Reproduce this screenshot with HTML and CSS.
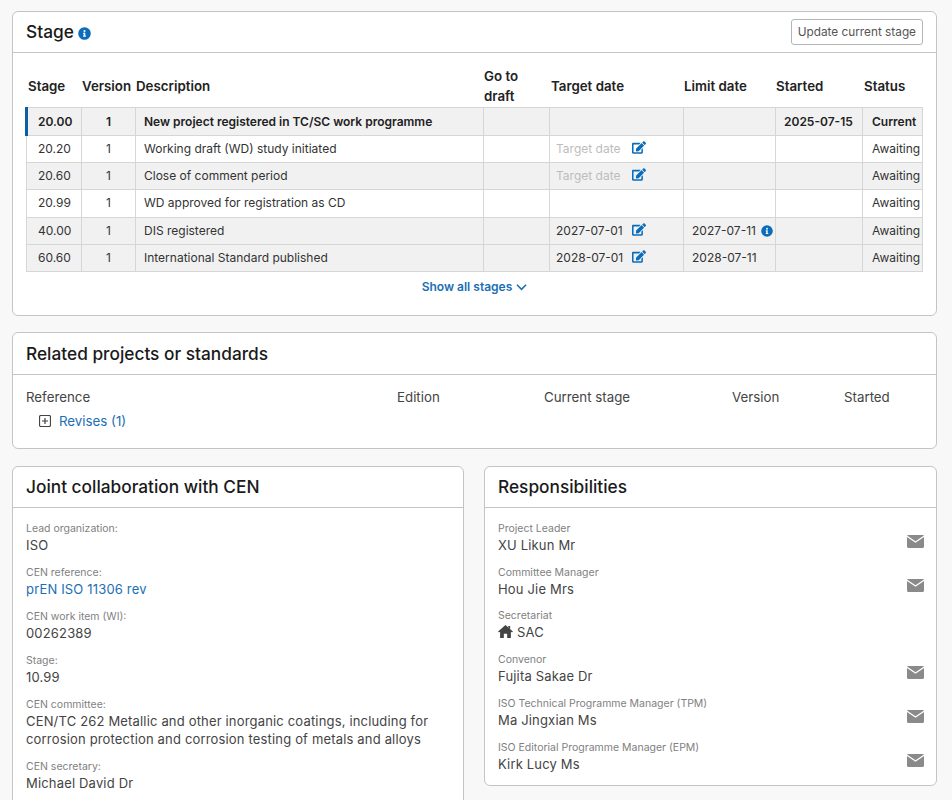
FILE: index.html
```html
<!DOCTYPE html>
<html lang="en">
<head>
<meta charset="utf-8">
<title>Stage</title>
<link rel="stylesheet" href="styles.css">
</head>
<body>
<svg class="defs" width="0" height="0" aria-hidden="true">
  <symbol id="i-info" viewBox="0 0 512 512"><path d="M256 8a248 248 0 1 0 0 496 248 248 0 0 0 0-496zm0 110a42 42 0 1 1 0 84 42 42 0 0 1 0-84zm56 254c0 7-5 12-12 12h-88c-7 0-12-5-12-12v-24c0-7 5-12 12-12h12v-64h-12c-7 0-12-5-12-12v-24c0-7 5-12 12-12h64c7 0 12 5 12 12v100h12c7 0 12 5 12 12z"/></symbol>
  <symbol id="i-edit" viewBox="0 0 576 512"><path d="M402.600 83.200l90.200 90.200c3.800 3.800 3.800 10 0 13.800L274.400 405.600l-92.800 10.300c-12.400 1.400-22.900-9.100-21.500-21.500l10.300-92.800L388.800 83.200c3.800-3.800 10-3.800 13.800 0zm162-22.900l-48.800-48.800c-15.200-15.200-39.900-15.200-55.200 0l-35.400 35.400c-3.800 3.800-3.800 10 0 13.800l90.200 90.200c3.800 3.800 10 3.800 13.800 0l35.400-35.400c15.200-15.300 15.200-40 0-55.200zM384 346.200V448H64V128h229.800c3.200 0 6.200-1.300 8.500-3.500l40-40c7.600-7.600 2.200-20.500-8.500-20.500H48C21.500 64 0 85.500 0 112v352c0 26.500 21.500 48 48 48h352c26.500 0 48-21.500 48-48V306.200c0-10.700-12.900-16-20.500-8.500l-40 40c-2.200 2.300-3.500 5.300-3.500 8.500z"/></symbol>
  <symbol id="i-mail" viewBox="0 0 17 13"><path d="M1.200 0h14.600c.6 0 1 .2 1.200.5L8.500 6.300 0 .5C.2.200.6 0 1.200 0zM0 2l8.500 5.800L17 2v9.800c0 .7-.5 1.200-1.200 1.200H1.200C.5 13 0 12.500 0 11.800z"/></symbol>
  <symbol id="i-home" viewBox="0 0 16 14"><path d="M8 0 16 7 15 8.200 13.800 7.200V14H9.800V9.500H6.200V14H2.200V7.200L1 8.200 0 7zM11 1h2v3.200L11 2.500z"/></symbol>
</svg>
<main class="page">
  <section class="card">
    <header class="card-head">
      <h2 class="title">Stage <svg class="ic-info-lg"><use href="#i-info"/></svg></h2>
      <button class="btn" type="button">Update current stage</button>
    </header>
    <div class="card-body body-stage">
      <table class="stages">
        <colgroup>
          <col class="c1"><col class="c2"><col class="c3"><col class="c4"><col class="c5"><col class="c6"><col class="c7"><col class="c8">
        </colgroup>
        <thead>
          <tr><th class="th-wide">Stage</th><th>Version</th><th>Description</th><th>Go to draft</th><th class="th-wide">Target date</th><th>Limit date</th><th>Started</th><th class="th-wide">Status</th></tr>
        </thead>
        <tbody>
          <tr class="current alt"><td class="num"><span class="bar"></span>20.00</td><td class="ver">1</td><td class="desc">New project registered in TC/SC work programme</td><td></td><td></td><td></td><td class="date">2025-07-15</td><td class="st">Current</td></tr>
          <tr><td class="num">20.20</td><td class="ver">1</td><td class="desc">Working draft (WD) study initiated</td><td></td><td class="date tcell"><span class="tgt muted">Target date</span><svg class="ic-edit"><use href="#i-edit"/></svg></td><td></td><td></td><td class="st">Awaiting</td></tr>
          <tr class="alt"><td class="num">20.60</td><td class="ver">1</td><td class="desc">Close of comment period</td><td></td><td class="date tcell"><span class="tgt muted">Target date</span><svg class="ic-edit"><use href="#i-edit"/></svg></td><td></td><td></td><td class="st">Awaiting</td></tr>
          <tr class="tall"><td class="num">20.99</td><td class="ver">1</td><td class="desc">WD approved for registration as CD</td><td></td><td></td><td></td><td></td><td class="st">Awaiting</td></tr>
          <tr class="alt"><td class="num">40.00</td><td class="ver">1</td><td class="desc">DIS registered</td><td></td><td class="date tcell"><span class="tgt">2027-07-01</span><svg class="ic-edit"><use href="#i-edit"/></svg></td><td class="date">2027-07-11<svg class="ic-info"><use href="#i-info"/></svg></td><td></td><td class="st">Awaiting</td></tr>
          <tr class="alt"><td class="num">60.60</td><td class="ver">1</td><td class="desc">International Standard published</td><td></td><td class="date tcell"><span class="tgt">2028-07-01</span><svg class="ic-edit"><use href="#i-edit"/></svg></td><td class="date">2028-07-11</td><td></td><td class="st">Awaiting</td></tr>
        </tbody>
      </table>
      <p class="show-all"><a href="#">Show all stages <svg class="chev" viewBox="0 0 12 8"><path d="M1 1.500 6 6.500l5-5"/></svg></a></p>
    </div>
  </section>

  <section class="card">
    <header class="card-head head-tall"><h2 class="title">Related projects or standards</h2></header>
    <div class="card-body body-related">
      <div class="rel-grid">
        <span>Reference</span><span>Edition</span><span>Current stage</span><span>Version</span><span>Started</span>
      </div>
      <div class="revises">
        <svg class="plus" viewBox="0 0 12 12"><rect x=".5" y=".5" width="11" height="11" rx="1.500"/><path d="M6 3v6M3 6h6"/></svg>
        <a href="#">Revises (1)</a>
      </div>
    </div>
  </section>

  <div class="cols">
    <section class="card col-left">
      <header class="card-head"><h2 class="title">Joint collaboration with CEN</h2></header>
      <div class="card-body body-list">
        <dl class="field"><dt>Lead organization:</dt><dd>ISO</dd></dl>
        <dl class="field"><dt>CEN reference:</dt><dd><a href="#">prEN ISO 11306 rev</a></dd></dl>
        <dl class="field"><dt>CEN work item (WI):</dt><dd>00262389</dd></dl>
        <dl class="field"><dt>Stage:</dt><dd>10.99</dd></dl>
        <dl class="field"><dt>CEN committee:</dt><dd>CEN/TC 262 Metallic and other inorganic coatings, including for corrosion protection and corrosion testing of metals and alloys</dd></dl>
        <dl class="field"><dt>CEN secretary:</dt><dd>Michael David Dr</dd></dl>
      </div>
    </section>
    <section class="card col-right">
      <header class="card-head"><h2 class="title">Responsibilities</h2></header>
      <div class="card-body body-resp">
        <div class="person"><dl class="field"><dt>Project Leader</dt><dd>XU Likun Mr</dd></dl><svg class="mail"><use href="#i-mail"/></svg></div>
        <div class="person person-tight"><dl class="field"><dt>Committee Manager</dt><dd>Hou Jie Mrs</dd></dl><svg class="mail"><use href="#i-mail"/></svg></div>
        <div class="person"><dl class="field"><dt>Secretariat</dt><dd><svg class="home"><use href="#i-home"/></svg>SAC</dd></dl></div>
        <div class="person"><dl class="field"><dt>Convenor</dt><dd>Fujita Sakae Dr</dd></dl><svg class="mail"><use href="#i-mail"/></svg></div>
        <div class="person"><dl class="field"><dt>ISO Technical Programme Manager (TPM)</dt><dd>Ma Jingxian Ms</dd></dl><svg class="mail"><use href="#i-mail"/></svg></div>
        <div class="person"><dl class="field"><dt>ISO Editorial Programme Manager (EPM)</dt><dd>Kirk Lucy Ms</dd></dl><svg class="mail"><use href="#i-mail"/></svg></div>
      </div>
    </section>
  </div>
</main>
</body>
</html>
```
FILE: styles.css
```css
* { box-sizing: border-box; }
html, body { margin: 0; padding: 0; height: 800px; overflow: hidden; }
body { background: #f8f8f8; color: #333; font-family: Inter, "Liberation Sans", sans-serif; font-size: 14px; line-height: 20px; }
a { color: #1a6fb5; text-decoration: none; }
.defs { position: absolute; }
.page { padding: 11px 15px 0 12px; display: flex; flex-direction: column; gap: 16px; }
.card { background: #fff; border: 1px solid #c4c4c4; border-radius: 6px; }
.card-head { height: 41px; border-bottom: 1px solid #c4c4c4; padding: 0 13px; display: flex; align-items: center; justify-content: space-between; }
.head-tall { height: 42px; }
.title { margin: 0; font-size: 17.3px; line-height: 24px; font-weight: 500; color: #1a1a1a; display: flex; align-items: center; gap: 4px; }
.ic-info-lg { width: 13px; height: 13px; fill: #0b6cbb; margin-top: 2px; }
.btn { height: 26px; padding: 0 6px; background: #fff; border: 1px solid #b5b5b5; border-radius: 3px; font: 11.800px/18px Inter, "Liberation Sans", sans-serif; color: #555; }
.body-stage { padding: 13px 13px 0; height: 262px; }
.stages { border-collapse: collapse; table-layout: fixed; width: 896px; }
.c1 { width: 55px; } .c2 { width: 54px; } .c3 { width: 348px; } .c4 { width: 66px; } .c5 { width: 134px; } .c6 { width: 92px; } .c7 { width: 87px; } .c8 { width: 60px; }
.stages th { font-weight: 600; font-size: 13.3px; line-height: 20px; text-align: left; color: #222; padding: 0 0 1px .5px; height: 41px; vertical-align: middle; }
.stages th.th-wide { padding-left: 1.500px; }
.stages td { border: 1px solid #d6d6d6; font-size: 12px; line-height: 18px; height: 27px; padding: 0 8px; color: #333; white-space: nowrap; }
.stages tr.tall td { height: 28px; padding-bottom: 1px; }
.stages .alt td { background: #f1f1f1; }
.stages .current td { font-weight: 600; color: #222; height: 28px; }
.stages .num { padding: 0 0 0 11px; position: relative; }
.bar { position: absolute; left: -2px; top: -1px; bottom: -1px; width: 3px; background: #0b5fa5; }
.stages .ver { text-align: center; }
.stages .tcell { padding-left: 6px; }
.stages .st { padding: 0 0 0 9px; }
.tgt { display: inline-block; width: 76px; }
.muted { color: #bdbdbd; }
.ic-edit { width: 14px; height: 13px; fill: #0b6cbb; vertical-align: -1px; }
.ic-info { width: 12px; height: 12px; fill: #0b6cbb; margin-left: 5px; vertical-align: -2px; }
.show-all { margin: 5px 0 0; text-align: center; font-size: 12px; line-height: 20px; font-weight: 600; }
.chev { width: 11px; height: 8px; fill: none; stroke: #1a6fb5; stroke-width: 1.700; margin-left: 1px; }
.body-related { padding: 12px 13px 0; height: 73px; color: #444; font-size: 13.300px; }
.rel-grid { display: grid; grid-template-columns: 371px 147px 188px 112px 1fr; }
.revises { margin: 4px 0 0 13px; display: flex; align-items: center; gap: 8px; }
.plus { width: 12px; height: 12px; fill: none; stroke: #444; stroke-width: 1.200; }
.cols { display: flex; gap: 20px; align-items: flex-start; margin-top: 1px; }
.col-left { width: 452px; height: 400px; }
.col-right { width: 453px; height: 320px; }
.body-list { padding: 12px 13px 0; display: flex; flex-direction: column; gap: 10px; }
.body-resp { padding: 11px 12px 0 13px; display: flex; flex-direction: column; gap: 8px; }
.field { margin: 0; }
.field dt { font-size: 10.500px; line-height: 16px; color: #7f7f7f; margin: 1px 0 -1px; }
.field dd { margin: 0; font-size: 13px; line-height: 18px; color: #444; letter-spacing: .17px; }
.person { display: flex; justify-content: space-between; align-items: center; height: 36px; }
.person-tight { height: 35px; }
.mail { width: 17px; height: 13px; fill: #8a8a8a; margin-top: 9px; }
.home { width: 15px; height: 13px; fill: #444; margin-right: 4px; vertical-align: -1px; }
```
